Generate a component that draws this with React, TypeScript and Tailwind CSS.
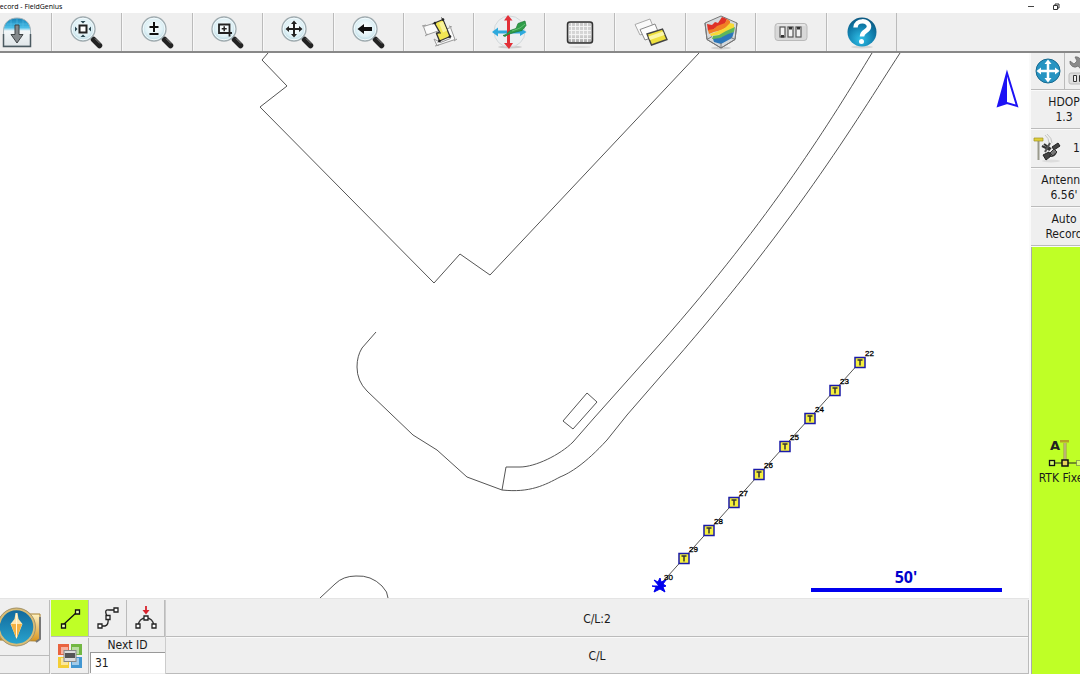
import { useState } from "react";
import type { ReactNode } from "react";

interface SurveyPoint {
  id: number;
  x: number;
  y: number;
}

const POINTS: SurveyPoint[] = [
  { id: 22, x: 860, y: 362 },
  { id: 23, x: 835, y: 390 },
  { id: 24, x: 810, y: 418 },
  { id: 25, x: 785, y: 446 },
  { id: 26, x: 759, y: 474 },
  { id: 27, x: 734, y: 502 },
  { id: 28, x: 709, y: 530 },
  { id: 29, x: 684, y: 558 },
];

// Magnifier shared by all of the zoom tools, the children go on the lens
function Magnifier({ children }: { children: ReactNode }) {
  return (
    <svg viewBox="0 0 36 36" className="w-9 h-9">
      <defs>
        <radialGradient id="lens" cx="50%" cy="45%" r="60%">
          <stop offset="0" stopColor="#ffffff" />
          <stop offset="0.6" stopColor="#dff1f6" />
          <stop offset="1" stopColor="#a3cbd7" />
        </radialGradient>
      </defs>
      <path d="M21.5 22.5l3 3" stroke="#999" strokeWidth="3" />
      <path d="M24.500 25.500l6 6" stroke="#222" strokeWidth="5.500" strokeLinecap="round" />
      <path d="M26 24.500l5 5" stroke="#888" strokeWidth="1" />
      <circle cx="14" cy="15" r="12" fill="url(#lens)" stroke="#a0abaf" strokeWidth="1.300" />
      <circle cx="14" cy="15" r="10.800" fill="none" stroke="#f4fbfd" strokeWidth="1" />
      <g transform="translate(-1 -0.500)">{children}</g>
    </svg>
  );
}

function ZoomExtentsIcon() {
  return (
    <Magnifier>
      <rect x="11.500" y="12" width="7" height="7" fill="#fff" stroke="#222" strokeWidth="2" />
      <path d="M12.500 7.500h5l-2.500 2.500zM12.500 23.500h5l-2.500-2.500zM7 13v5l2.500-2.500zM23 13v5l-2.500-2.500z" fill="#2a4650" />
    </Magnifier>
  );
}

function ZoomInOutIcon() {
  return (
    <Magnifier>
      <path d="M15 8.500v10M10.500 13.500h9M10.500 20.500h9" stroke="#111" strokeWidth="2" fill="none" />
    </Magnifier>
  );
}

function ZoomWindowIcon() {
  return (
    <Magnifier>
      <path d="M20.500 23V11h-10.500v8.500h13" stroke="#222" strokeWidth="1.800" fill="none" />
      <path d="M15.200 12.800v5M12.700 15.300h5" stroke="#222" strokeWidth="1.500" />
    </Magnifier>
  );
}

function PanIcon() {
  return (
    <Magnifier>
      <path d="M15 9v13M8.500 15.500h13" stroke="#222" strokeWidth="2" />
      <path d="M15 7l3 3.500h-6zM15 24l3-3.500h-6zM6.500 15.500l3.500-3v6zM23.500 15.500l-3.500-3v6z" fill="#222" />
    </Magnifier>
  );
}

function ZoomPreviousIcon() {
  return (
    <Magnifier>
      <path d="M7.500 15.500l6.500-5v3h8v4h-8v3z" fill="#111" />
    </Magnifier>
  );
}

function DownloadIcon() {
  return (
    <svg viewBox="0 0 32 32" className="w-8 h-8">
      <defs>
        <linearGradient id="tray" x1="0" y1="0" x2="0" y2="1">
          <stop offset="0" stopColor="#1680b4" />
          <stop offset="0.34" stopColor="#45bce6" />
          <stop offset="0.46" stopColor="#f3f7f9" />
          <stop offset="1" stopColor="#e0e6e9" />
        </linearGradient>
      </defs>
      <path d="M2.500 30V15C2.500 6 9 2 16 2s13.500 4 13.500 13v15z" fill="url(#tray)" stroke="#a5b3b9" />
      <path d="M2.500 18v12.500h27V18" fill="none" stroke="#4b5a61" strokeWidth="1.500" />
      <path d="M6 8h20M4 11h24M10 4v7M16 2v8M22 4v7" stroke="#5fc2e8" strokeWidth="0.500" />
      <path d="M14 9h4v9.500h4L16 27l-6-8.500h4z" fill="#85898c" stroke="#3f4446" />
    </svg>
  );
}

function ParcelIcon() {
  return (
    <svg viewBox="0 0 36 36" className="w-9 h-9">
      <path d="M2.500 12.500l13-4 3 8-13 4.500z" fill="#fbfbfb" stroke="#999" />
      <path d="M13 25l3 6.500 18-6-4.500-12-4 1.500 4 9.500-10 4z" fill="#fbfbfb" stroke="#999" />
      <path d="M1 12l4-1M4 22l3-2M14 32l4-1M33 27l3-2M28 12l3 1" fill="none" stroke="#999" />
      <path d="M13.500 9l8.500-3.500 7 17-10.500 4.500-3-7.500 3-1.500z" fill="#f2e653" stroke="#333" strokeWidth="1.300" />
      <path d="M18 9l4-1.500 4 9-4 2z" fill="#faf39b" />
      <path d="M11.500 10l3-1M20.500 3.500l2 3.500M15 19h5M27 23.500l3-1M17 28.500l2-2" stroke="#333" />
      <circle cx="14" cy="9" r="1.300" fill="#222" />
      <circle cx="22" cy="5.500" r="1.300" fill="#222" />
      <circle cx="29" cy="22.500" r="1.300" fill="#222" />
      <circle cx="18.500" cy="27" r="1.300" fill="#222" />
    </svg>
  );
}

function AxesIcon() {
  return (
    <svg viewBox="0 0 36 36" className="w-9 h-9">
      <ellipse cx="18" cy="33" rx="12" ry="1.500" fill="#ccc" />
      <circle cx="17.500" cy="17.500" r="15.500" fill="#ebeff1" stroke="#d3d8da" />
      <path d="M0 18l6-4.500v3h22V14l6.500 4-6.500 4v-2.500H6v3z" fill="#2ea9dd" />
      <path d="M16 1l4.500 5.500H18V29h3L17 35l-5-6h3V6.500h-3z" fill="#e23038" />
      <path d="M11 21.500l3-1 4-4 6-2 2-5 7-2.500 1 4.500-4 5-8 2-6 2-3 2z" fill="#2f9d48" stroke="#1a7a32" strokeWidth="0.700" />
      <path d="M20 17l8-3 5-4" fill="none" stroke="#62c274" />
    </svg>
  );
}

function GridIcon() {
  return (
    <svg viewBox="0 0 36 36" className="w-9 h-9">
      <defs>
        <linearGradient id="grid" x1="0" y1="0" x2="0" y2="1">
          <stop offset="0" stopColor="#c8c8c8" />
          <stop offset="0.600" stopColor="#d8d8d8" />
          <stop offset="1" stopColor="#a8a8a8" />
        </linearGradient>
      </defs>
      <ellipse cx="18" cy="33" rx="11" ry="1" fill="#ddd" />
      <rect x="5.500" y="8" width="25" height="21" rx="2.500" fill="url(#grid)" stroke="#333" strokeWidth="1.500" />
      <path d="M9.500 9v19M13.500 9v19M17.500 9v19M21.500 9v19M25.500 9v19M7 12.500h22M7 16.500h22M7 20.500h22M7 24.500h22" stroke="#f6f6f6" strokeWidth="0.900" />
    </svg>
  );
}

function LayersIcon() {
  return (
    <svg viewBox="0 0 36 36" className="w-9 h-9">
      <path d="M2 10.500l15-5.500 4.500 11-14.500 5z" fill="#fafafa" stroke="#aaa" />
      <path d="M7 15.500l15-5.500 4.500 11-14.500 5z" fill="#fdfdfd" stroke="#888" />
      <path d="M14 20l15.500-5 4.500 10.500-15.500 5.500z" fill="#efe13f" stroke="#444" strokeWidth="1.400" />
      <path d="M15.500 22.500l14.500-5 1.500 3.500-14.500 5z" fill="#fbf6a8" />
    </svg>
  );
}

function SurfaceIcon() {
  return (
    <svg viewBox="0 0 36 36" className="w-9 h-9">
      <ellipse cx="18" cy="34" rx="10" ry="1.500" fill="#d0d0d0" />
      <path d="M18 2l16 7-2 16.500-14 8.500-14-8.500L2 9z" fill="#d5d9dc" stroke="#777" />
      <path d="M4 10l5 1 3-3 3 1 4-6 5 2-2 5-8 3-6 4H5z" fill="#df3126" />
      <path d="M5 16l6-1 3-3 8-3 2-4 3 2v4l-8 5-8 2-5 2z" fill="#f07f25" />
      <path d="M7 20l6-2 9-4 5-5 4 1v4l-9 5-8 2-6 1z" fill="#f6d935" />
      <path d="M10 22l6-1 7-4 9-4-1 5-8 4-8 3-6 0z" fill="#5fb65a" />
      <path d="M10 25l7-1 8-4 6-2-2 6-11 6-7-2z" fill="#2d77ba" />
      <path d="M34 9l-2 16.500-14 8.500-14-8.500L2 9M18 29v5M4 25.500l5-3M32 25.500l-4-2" fill="none" stroke="#777" />
    </svg>
  );
}

function SwitchesIcon() {
  return (
    <svg viewBox="0 0 36 36" className="w-9 h-9">
      <rect x="2" y="9.500" width="32" height="17" rx="3" fill="#d8d8d8" stroke="#bababa" />
      <path d="M4 11h28" stroke="#f2f2f2" />
      {[7, 15, 23].map((x) => (
        <g key={x}>
          <rect x={x} y="13" width="5" height="10" fill="#f3f3f3" stroke="#555" strokeWidth="1.200" />
          <rect x={x + 1} y={x === 7 ? 21 : 13} width="3" height="2.500" fill="#333" />
        </g>
      ))}
    </svg>
  );
}

function HelpIcon() {
  return (
    <svg viewBox="0 0 36 36" className="w-9 h-9">
      <defs>
        <radialGradient id="ball" cx="45%" cy="75%" r="75%">
          <stop offset="0" stopColor="#2fc0e8" />
          <stop offset="0.6" stopColor="#117fae" />
          <stop offset="1" stopColor="#0b577f" />
        </radialGradient>
      </defs>
      <ellipse cx="18" cy="33" rx="11" ry="1.500" fill="#d6d6d6" />
      <circle cx="18" cy="18" r="14.500" fill="url(#ball)" />
      <path d="M11.500 13.500c0-8 13.500-8 13.500-1 0 5-7 4.500-7 10" fill="none" stroke="#fff" strokeWidth="4.500" />
      <circle cx="17.500" cy="27.500" r="2.500" fill="#fff" />
    </svg>
  );
}

function MoveIcon() {
  return (
    <svg viewBox="0 0 26 26" className="w-[26px] h-[26px]">
      <circle cx="13" cy="13" r="12" fill="#2794c2" stroke="#17698f" />
      <path d="M13 5v16M5 13h16" stroke="#fff" strokeWidth="2.500" />
      <path d="M13 1.500l3.500 4.500h-7zM13 24.500l3.500-4.500h-7zM1.500 13L6 9.500v7zM24.500 13L20 9.500v7z" fill="#fff" />
    </svg>
  );
}

function WrenchIcon() {
  return (
    <svg viewBox="0 0 30 30" className="w-[30px] h-[30px] shrink-0">
      <path d="M3 5a5 5 0 0 0 8 5l9 10 3-3-9-10a5 5 0 0 0-6-6l2 4-3 3z" fill="#8b8b8b" stroke="#666" strokeWidth="0.700" />
      <rect x="2" y="17" width="27" height="11" rx="2" fill="#ddd" stroke="#bbb" />
      <path d="M6.500 19.500h3v6h-3zM12.500 19.500h3v6h-3zM18.500 19.500h3v6h-3z" fill="#eee" stroke="#333" />
    </svg>
  );
}

function SatelliteIcon() {
  return (
    <svg viewBox="0 0 30 30" className="w-[30px] h-[30px]">
      <ellipse cx="18" cy="27" rx="9" ry="1.500" fill="#ddd" />
      <path d="M5.500 7v19" stroke="#9a9a8c" strokeWidth="2" />
      <path d="M1 4h9v3H1z" fill="#e0cf3a" stroke="#9d9225" strokeWidth="0.700" />
      <path d="M12 1q4 3 4 8M14 0q5 4 5 9" fill="none" stroke="#c4c4c4" />
      <path d="M9 12l8 4M11 10l7 5" stroke="#333" strokeWidth="2" />
      <path d="M17 9l-5 9" stroke="#555" strokeWidth="2" />
      <path d="M19 13l6-4 2 3-6 4zM10 21l6-3 2 4-5 4z" fill="#444" stroke="#222" />
      <path d="M17 19l4-4 3 3-4 4z" fill="#777" stroke="#333" />
      <path d="M16 22q5 1 7-3" fill="none" stroke="#333" strokeWidth="1.500" />
    </svg>
  );
}

function RtkIcon() {
  return (
    <svg viewBox="0 0 36 32" className="w-9 h-8">
      <text x="3" y="12" className="text-[13px] font-bold fill-[#222] font-['DejaVu_Sans',sans-serif]">A</text>
      <path d="M18 5v17" stroke="#9d9250" strokeWidth="3" />
      <path d="M18 5v17" stroke="#dad29a" strokeWidth="1" />
      <path d="M13 2h9v2.500h-9z" fill="#b6a227" />
      <path d="M5 25h27" stroke="#222" />
      <rect x="2.500" y="22.500" width="5" height="5" fill="#d8ff70" stroke="#111" strokeWidth="1.300" />
      <rect x="15" y="22" width="6" height="6" fill="#e7d55c" stroke="#111" strokeWidth="1.500" />
      <rect x="29.500" y="22.500" width="5" height="5" fill="#d8ff70" stroke="#555" strokeDasharray="1 1" />
    </svg>
  );
}

function CompassIcon() {
  return (
    <svg viewBox="0 0 44 44" className="w-11 h-11">
      <defs>
        <linearGradient id="gold" x1="0" y1="0" x2="0" y2="1">
          <stop offset="0" stopColor="#fff3c4" />
          <stop offset="1" stopColor="#d9951d" />
        </linearGradient>
        <linearGradient id="dial" x1="0" y1="0" x2="0" y2="1">
          <stop offset="0" stopColor="#11679a" />
          <stop offset="1" stopColor="#29a5cf" />
        </linearGradient>
      </defs>
      <path d="M1 34V11h25l3-3h12v24l-3 3z" fill="url(#gold)" stroke="#a8802f" />
      <path d="M41 11v22l-4 3" fill="none" stroke="#777" strokeWidth="2" />
      <circle cx="17.500" cy="21" r="18" fill="url(#dial)" stroke="#d8bc76" strokeWidth="2.500" />
      <circle cx="17.500" cy="21" r="19" fill="none" stroke="#8b8064" strokeWidth="0.700" />
      <path d="M16.500 7h2l1 6 4 5-6 15-6-15 4-5z" fill="#ffe6ad" />
      <path d="M12 18h11l-5.500 15z" fill="#f3b143" />
      <path d="M17.500 7v25" stroke="#fff6d9" />
    </svg>
  );
}

function LineIcon() {
  return (
    <svg viewBox="0 0 24 24" className="w-6 h-6">
      <path d="M5 19L19 6" stroke="#111" strokeWidth="1.300" />
      <path d="M3.500 18h4v4h-4zM17.500 4h4v4h-4z" fill="#eaffad" stroke="#111" strokeWidth="1.300" />
    </svg>
  );
}

function CurveIcon() {
  return (
    <svg viewBox="0 0 24 24" className="w-6 h-6">
      <path d="M4 20h5q4-1 3-8Q7 3 13 4h7" fill="none" stroke="#222" strokeWidth="1.300" />
      <path d="M2 18h4v4H2zM10 9.500h4v4h-4zM18 2h4v4h-4z" fill="#fff" stroke="#222" strokeWidth="1.300" />
    </svg>
  );
}

function ArcIcon() {
  return (
    <svg viewBox="0 0 24 24" className="w-6 h-6">
      <path d="M12 0v6" stroke="#d8232e" strokeWidth="1.800" />
      <path d="M12 8.500L8.500 4h7z" fill="#d8232e" />
      <path d="M4 20q1-8 8-8t8 8" fill="none" stroke="#333" strokeWidth="1.300" />
      <path d="M2 18h4v4H2zM10 10h4v4h-4zM18 18h4v4h-4z" fill="#fff" stroke="#222" strokeWidth="1.300" />
    </svg>
  );
}

function WindowsIcon() {
  return (
    <svg viewBox="0 0 28 28" className="w-7 h-7">
      <path d="M2 2h11v11H2z" fill="#e9633f" />
      <path d="M15 2h11v11H15z" fill="#73b843" />
      <path d="M2 15h11v11H2z" fill="#f4ce36" />
      <path d="M15 15h11v11H15z" fill="#4297d2" />
      <path d="M5 5h7v7H5zM16 5h7v7h-7zM5 16h7v7H5zM16 16h7v7h-7z" fill="#fff" opacity="0.500" />
      <rect x="8" y="8.500" width="12" height="11" fill="#ddd" stroke="#888" />
      <path d="M9 11h10v5H9z" fill="#555" />
    </svg>
  );
}

const TOOLS = [
  { label: "Zoom extents", icon: <ZoomExtentsIcon /> },
  { label: "Zoom in or out", icon: <ZoomInOutIcon /> },
  { label: "Zoom window", icon: <ZoomWindowIcon /> },
  { label: "Pan", icon: <PanIcon /> },
  { label: "Zoom previous", icon: <ZoomPreviousIcon /> },
  { label: "Parcels", icon: <ParcelIcon /> },
  { label: "Orbit", icon: <AxesIcon /> },
  { label: "Grid", icon: <GridIcon /> },
  { label: "Layers", icon: <LayersIcon /> },
  { label: "Surfaces", icon: <SurfaceIcon /> },
  { label: "Options", icon: <SwitchesIcon /> },
  { label: "Help", icon: <HelpIcon /> },
];

const MODES = [
  { id: "line", label: "Line", icon: <LineIcon /> },
  { id: "curve", label: "Curve", icon: <CurveIcon /> },
  { id: "arc", label: "Arc", icon: <ArcIcon /> },
];

function SurveyMap() {
  return (
    <svg
      viewBox="0 53 1029 545"
      preserveAspectRatio="xMidYMid slice"
      className="w-full h-full block"
      role="img"
      aria-label="Survey map"
    >
      <g fill="none" stroke="#555" strokeWidth="1">
        <path d="M268 53L262 60L287 86L260 107L434 283L460 254L490 275L699 53" />
        <path d="M376 332L362 348Q357 356 357 367Q357 381 367 391L413 435L437 450L467 477L502 490" />
        <path d="M872 53C832 119 772 217 660 344L627 381L594 418L573 442C560 455 535 467 520 467L506 467L502 490" />
        <path d="M900 53C856 121 792 228 660 377L627 415L607 440C585 464 570 473 560 477C545 485 530 493 502 490" />
        <path d="M587 393L597 402L573 429L563 421Z" />
        <path d="M320 598L335 584Q343 576 356 576Q371 575 382 586Q388 592 388 598" />
        <path d="M860 362L659 586" />
      </g>

      {POINTS.map((p) => (
        <g key={p.id}>
          <rect x={p.x - 5} y={p.y - 4.5} width="10" height="10" fill="#f6f03c" stroke="#1a1aa8" strokeWidth="1.500" />
          <path d={`M${p.x - 2.5} ${p.y - 2}h5M${p.x} ${p.y - 2}v5.500`} stroke="#333" strokeWidth="1.500" />
          <text x={p.x + 5} y={p.y - 6} className="text-[8px] fill-black stroke-black stroke-[0.3px] font-['Liberation_Sans',sans-serif]">
            {p.id}
          </text>
        </g>
      ))}
      <path d="M659 586l-5-6 4 2 2-4 1 4 5-2-3 4 3 2-3 1 2 5-5-3-6 3 2-5-4-1z" fill="#00e" stroke="#00e" />
      <text x="664" y="580" className="text-[8px] fill-black stroke-black stroke-[0.3px] font-['Liberation_Sans',sans-serif]">30</text>

      <path d="M1007 73L998 106L1007 103Z" fill="#1d12f5" />
      <path d="M1007 73L998 106L1007 103L1017 106Z" fill="none" stroke="#1d12f5" strokeWidth="2" />

      <text x="906" y="583" textAnchor="middle" className="text-[16px] font-bold fill-[#0000cc] font-['Open_Sans',sans-serif]">50'</text>
      <path d="M811 590H1002" stroke="#00e" strokeWidth="4" />
    </svg>
  );
}

function StatusButton({ children }: { children: ReactNode }) {
  return (
    <button className="h-[38px] w-full bg-[#efefef] border-b border-[#bbb] text-center leading-[15px]">
      {children}
    </button>
  );
}

export default function App() {
  const [mode, setMode] = useState("line");
  const [nextId, setNextId] = useState("31");

  return (
    <div className="h-screen flex flex-col overflow-hidden bg-white text-[12px] text-[#1a1a1a] font-['DejaVu_Sans_Condensed','Noto_Sans',sans-serif]">
      <header className="h-[13px] shrink-0 flex items-center justify-between overflow-hidden">
        <h1 className="-ml-[3px] text-[7px] leading-[13px] text-black font-['Open_Sans',sans-serif]">
          record - FieldGenius
        </h1>
        <div className="flex items-center gap-4 pr-5">
          <button aria-label="Minimize" className="w-2 h-2 flex items-center">
            <span className="w-[6px] h-px bg-[#444]" />
          </button>
          <button aria-label="Restore" className="w-2 h-2">
            <svg viewBox="0 0 8 8" className="w-2 h-2" fill="none" stroke="#333">
              <path d="M1.500 2.500h4v4h-4zM3 2.500V1h4v4H5.500" />
            </svg>
          </button>
        </div>
      </header>

      <nav className="h-10 shrink-0 flex bg-[#efefef] border-b-2 border-[#888]">
        <button aria-label="Download" className="w-[52px] shrink-0 pl-[1px] border-r border-[#bbb]">
          <DownloadIcon />
        </button>
        <div className="basis-[845px] grid grid-cols-12">
          {TOOLS.map((tool) => (
            <button
              key={tool.label}
              aria-label={tool.label}
              className="flex items-center justify-center border-r border-[#bbb] border-l border-l-[#f8f8f8]"
            >
              {tool.icon}
            </button>
          ))}
        </div>
      </nav>

      <div className="flex-1 min-h-0 flex pb-px">
        <div className="flex-1 min-w-0 flex flex-col">
          <main className="flex-1 min-h-0">
            <SurveyMap />
          </main>

          <footer className="h-[76px] shrink-0 flex bg-[#efefef] border-t border-[#e4e4e4] pt-px">
            <div className="w-[50px] shrink-0 flex flex-col border-r border-[#bbb]">
              <button aria-label="Compass" className="h-14 -ml-[1px] border-b border-[#bbb] flex items-center">
                <CompassIcon />
              </button>
              <div className="flex-1 border-b border-[#bbb]" />
            </div>

            <div className="w-[116px] shrink-0 flex flex-col pl-px border-r border-[#ccc]">
              <div className="h-[38px] grid grid-cols-3 pb-px">
                {MODES.map((m) => (
                  <button
                    key={m.id}
                    aria-label={m.label}
                    onClick={() => setMode(m.id)}
                    className={`flex items-center justify-center border-r border-b border-[#bbb] ${
                      mode === m.id ? "bg-[#bfff26]" : ""
                    }`}
                  >
                    {m.icon}
                  </button>
                ))}
              </div>
              <div className="flex-1 flex">
                <button aria-label="Windows" className="w-[38px] flex items-center justify-center border-r border-b border-[#bbb]">
                  <WindowsIcon />
                </button>
                <div className="flex-1 min-w-0 flex flex-col pl-px pb-px">
                  <label htmlFor="next-id" className="h-[14px] leading-[14px] text-center">
                    Next ID
                  </label>
                  <input
                    id="next-id"
                    value={nextId}
                    onChange={(e) => setNextId(e.target.value)}
                    className="w-full flex-1 min-h-0 px-1 bg-white border-t border-l border-[#999] outline-none"
                  />
                </div>
              </div>
            </div>

            <div className="flex-1 flex flex-col border-r border-[#bbb]">
              <button className="flex-1 pt-[2px] border-b border-[#bbb]">C/L:2</button>
              <button className="flex-1 pt-[2px] border-b border-[#bbb] border-t border-t-[#fafafa]">C/L</button>
            </div>
          </footer>
        </div>

        {/* The side panel runs past the right edge of the window */}
        <aside className="w-[51px] shrink-0 overflow-hidden bg-[#fafafa] pl-[2px]">
          <div className="w-[66px] h-full flex flex-col gap-px">
            <div className="h-[37px] shrink-0 flex bg-[#efefef] border-b border-[#bbb]">
              <button aria-label="Move" className="w-[34px] flex items-center justify-center border-r border-[#bbb]">
                <MoveIcon />
              </button>
              <button aria-label="Settings" className="flex-1 flex items-center pl-[2px]">
                <WrenchIcon />
              </button>
            </div>
            <StatusButton>
              HDOP
              <br />
              1.3
            </StatusButton>
            <StatusButton>
              <span className="flex items-center gap-[10px] pl-[2px]">
                <SatelliteIcon />
                12
              </span>
            </StatusButton>
            <StatusButton>
              Antenna
              <br />
              6.56'
            </StatusButton>
            <StatusButton>
              Auto
              <br />
              Record
            </StatusButton>
            <button className="flex-1 flex flex-col items-center justify-center pt-1 bg-[#bfff26] border-l border-[#aaa]">
              <RtkIcon />
              <span className="leading-[17px]">RTK Fixed</span>
            </button>
          </div>
        </aside>
      </div>
    </div>
  );
}
